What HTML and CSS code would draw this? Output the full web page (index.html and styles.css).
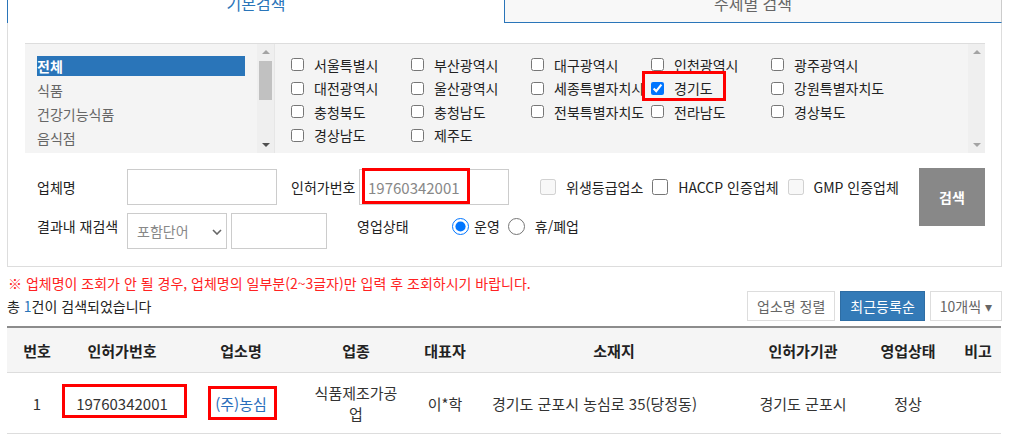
FILE: index.html
```html
<!DOCTYPE html>
<html lang="ko">

<head>
    <meta charset="UTF-8">
    <meta name="viewport" content="width=device-width, initial-scale=1.0">
    <title>업소 검색</title>
    <link rel="stylesheet" href="styles.css">
</head>

<body>
    <div class="wrap">
        <!-- 검색 탭 -->
        <div class="tabs">
            <div class="tab tab-on">기본검색</div>
            <div class="tab">주제별 검색</div>
        </div>

        <div class="panel">
            <div class="picker">
                <div class="cat-box">
                    <ul class="cat-list">
                        <li class="cat-on">전체</li>
                        <li>식품</li>
                        <li>건강기능식품</li>
                        <li>음식점</li>
                    </ul>
                    <div class="scroll">
                        <span class="arrow-up"></span>
                        <span class="thumb"></span>
                        <span class="arrow-down"></span>
                    </div>
                </div>
                <div class="area-box">
                    <div class="area-grid">
                        <label class="area"><input type="checkbox">서울특별시</label>
                        <label class="area"><input type="checkbox">부산광역시</label>
                        <label class="area"><input type="checkbox">대구광역시</label>
                        <label class="area"><input type="checkbox">인천광역시</label>
                        <label class="area"><input type="checkbox">광주광역시</label>
                        <label class="area"><input type="checkbox">대전광역시</label>
                        <label class="area"><input type="checkbox">울산광역시</label>
                        <label class="area"><input type="checkbox">세종특별자치시</label>
                        <label class="area"><input type="checkbox" checked>경기도</label>
                        <label class="area"><input type="checkbox">강원특별자치도</label>
                        <label class="area"><input type="checkbox">충청북도</label>
                        <label class="area"><input type="checkbox">충청남도</label>
                        <label class="area"><input type="checkbox">전북특별자치도</label>
                        <label class="area"><input type="checkbox">전라남도</label>
                        <label class="area"><input type="checkbox">경상북도</label>
                        <label class="area"><input type="checkbox">경상남도</label>
                        <label class="area"><input type="checkbox">제주도</label>
                    </div>
                    <div class="scroll">
                        <span class="arrow-up"></span>
                        <span class="arrow-down"></span>
                    </div>
                </div>
            </div>

            <div class="search">
                <div class="fields">
                    <div class="row">
                        <span class="lbl">업체명</span>
                        <input class="txt" type="text">
                        <span class="lbl lbl-no">인허가번호</span>
                        <input class="txt" type="text" value="19760342001">
                        <label class="chk chk-first"><input type="checkbox" disabled>위생등급업소</label>
                        <label class="chk"><input type="checkbox">HACCP 인증업체</label>
                        <label class="chk"><input type="checkbox" disabled>GMP 인증업체</label>
                    </div>
                    <div class="row row-two">
                        <span class="lbl">결과내 재검색</span>
                        <div class="sel-wrap">
                            <select class="sel">
                                <option>포함단어</option>
                            </select>
                            <svg class="chev" width="10" height="6" viewBox="0 0 10 6">
                                <polyline points="1,1 5,5 9,1" fill="none" stroke="#666" stroke-width="1.6"/>
                            </svg>
                        </div>
                        <input class="txt txt-small" type="text">
                        <span class="lbl lbl-state">영업상태</span>
                        <label class="rad"><input type="radio" name="state" checked>운영</label>
                        <label class="rad rad-off"><input type="radio" name="state">휴/폐업</label>
                    </div>
                </div>
                <button class="btn-search">검색</button>
            </div>
        </div>

        <p class="notice">※ 업체명이 조회가 안 될 경우, 업체명의 일부분(2~3글자)만 입력 후 조회하시기 바랍니다.</p>

        <div class="result-bar">
            <span class="total">총 <em>1</em>건이 검색되었습니다</span>
            <div class="sorts">
                <button class="btn">업소명 정렬</button>
                <button class="btn btn-on">최근등록순</button>
                <button class="btn">10개씩 ▾</button>
            </div>
        </div>

        <table class="list">
            <colgroup>
                <col style="width: 60px">
                <col style="width: 110px">
                <col style="width: 128px">
                <col style="width: 102px">
                <col style="width: 76px">
                <col style="width: 262px">
                <col style="width: 116px">
                <col style="width: 94px">
                <col style="width: 46px">
            </colgroup>
            <thead>
                <tr>
                    <th>번호</th>
                    <th>인허가번호</th>
                    <th>업소명</th>
                    <th>업종</th>
                    <th>대표자</th>
                    <th>소재지</th>
                    <th>인허가기관</th>
                    <th>영업상태</th>
                    <th>비고</th>
                </tr>
            </thead>
            <tbody>
                <tr>
                    <td>1</td>
                    <td>19760342001</td>
                    <td><a class="link" href="#">(주)농심</a></td>
                    <td>식품제조가공업</td>
                    <td>이*학</td>
                    <td class="addr">경기도 군포시 농심로 35(당정동)</td>
                    <td>경기도 군포시</td>
                    <td>정상</td>
                    <td></td>
                </tr>
            </tbody>
        </table>
    </div>

    <!-- 강조 표시 -->
    <div class="mark mark-area"></div>
    <div class="mark mark-input"></div>
    <div class="mark mark-no"></div>
    <div class="mark mark-name"></div>
</body>

</html>
```

FILE: styles.css
```css
body {
    margin: 0;
    position: relative;
    font-family: "Noto Sans CJK KR", "Noto Sans", sans-serif;
    font-size: 14px;
    color: #222;
    overflow: hidden;
}

.wrap {
    margin-left: 7px;
    width: 995px;
}

/* 탭 */
.tabs {
    display: flex;
    margin-top: -22px;
    height: 45px;
}

.tab {
    flex: 1;
    box-sizing: border-box;
    text-align: center;
    padding-top: 4px;
    line-height: 40px;
    font-size: 16px;
    color: #666;
    background: #f8f8f8;
    border: 1px solid #ccc;
    border-left: none;
    border-bottom: 1px solid #2a75b9;
}

.tab-on {
    color: #2a75b9;
    background: #fff;
    border: 1px solid #2a75b9;
    border-bottom: none;
}

.panel {
    border: 1px solid #ddd;
    border-top: none;
    padding: 20px 16px 17px 17px;
}

/* 업종 / 지역 선택 */
.picker {
    display: flex;
    height: 109px;
    border-top: 1px solid #ddd;
    background: #f4f4f4;
}

.cat-box {
    display: flex;
    width: 250px;
    border-right: 1px solid #e6e6e6;
    box-sizing: border-box;
}

.cat-list {
    flex: 1;
    list-style: none;
    margin: 0;
    padding: 12px 12px 0;
}

.cat-list li {
    height: 20px;
    line-height: 20px;
    margin-bottom: 4px;
    color: #666;
}

.cat-list .cat-on {
    background: #2a75b9;
    color: #fff;
    font-weight: bold;
}

.scroll {
    width: 17px;
    background: #efefef;
    display: flex;
    flex-direction: column;
    align-items: center;
}

.arrow-up {
    margin-top: 6px;
    border: 4px solid transparent;
    border-top: none;
    border-bottom: 4px solid #a3a3a3;
}

.arrow-down {
    margin-top: auto;
    margin-bottom: 6px;
    border: 4px solid transparent;
    border-bottom: none;
    border-top: 4px solid #a3a3a3;
}

.cat-box .arrow-down {
    border-top-color: #505050;
}

.thumb {
    margin-top: 7px;
    width: 13px;
    height: 39px;
    background: #c1c1c1;
}

.area-box {
    flex: 1;
    display: flex;
}

.area-grid {
    flex: 1;
    display: grid;
    grid-template-columns: repeat(5, 120px);
    grid-auto-rows: 23.5px;
    padding: 9px 0 0 16px;
}

.area {
    display: flex;
    align-items: center;
    gap: 10px;
    white-space: nowrap;
    color: #222;
}

.area input {
    margin: 0;
    width: 13px;
    height: 13px;
}

/* 검색 조건 */
.search {
    display: flex;
    margin-top: 15px;
}

.fields {
    flex: 1;
    padding-left: 12px;
}

.row {
    display: flex;
    align-items: center;
    height: 36px;
    margin-top: 1px;
}

.row-two {
    margin-top: 8px;
    align-items: flex-start;
}

.lbl {
    width: 90px;
    flex-shrink: 0;
    white-space: nowrap;
}

.row-two .lbl {
    line-height: 26px;
}

.lbl-no {
    width: 68px;
    margin-left: 14px;
}

.lbl-state {
    width: 95px;
    margin-left: 30px;
}

.txt {
    box-sizing: border-box;
    width: 150px;
    height: 36px;
    border: 1px solid #ccc;
    padding: 0 8px;
    font-family: inherit;
    font-size: 15px;
    color: #888;
    outline: none;
}

.txt-small {
    width: 96px;
    margin-left: 4px;
}

.sel-wrap {
    position: relative;
}

.sel {
    appearance: none;
    box-sizing: border-box;
    width: 100px;
    height: 36px;
    border: 1px solid #ccc;
    background: #fff;
    padding: 0 9px;
    font-family: inherit;
    font-size: 14px;
    color: #888;
}

.chev {
    position: absolute;
    left: 85px;
    top: 16px;
}

.chk {
    display: flex;
    align-items: center;
    gap: 10px;
    margin-left: 9px;
    white-space: nowrap;
}

.chk-first {
    margin-left: 31px;
}

.chk input {
    margin: 0;
    width: 16px;
    height: 16px;
}

.rad {
    display: flex;
    align-items: center;
    gap: 5px;
    height: 26px;
    white-space: nowrap;
}

.rad input {
    margin: 0;
    width: 17px;
    height: 17px;
}

.rad-off {
    margin-left: 8px;
    gap: 10px;
}

.btn-search {
    width: 66px;
    height: 58px;
    border: none;
    background: #888;
    color: #fff;
    font-family: inherit;
    font-size: 14px;
    font-weight: bold;
}

/* 결과 */
.notice {
    margin: 7px 0 0 1px;
    line-height: 18px;
    color: #f22;
}

.result-bar {
    display: flex;
    align-items: center;
    justify-content: space-between;
    margin-top: -1px;
}

.total em {
    font-style: normal;
    color: #2a75b9;
}

.sorts {
    display: flex;
    gap: 5px;
}

.btn {
    height: 30px;
    padding: 0 9px;
    border: 1px solid #ddd;
    background: #fff;
    color: #666;
    font-family: inherit;
    font-size: 14px;
}

.btn-on {
    background: #337ab7;
    border-color: #2e6da4;
    color: #fff;
}

.list {
    width: 994px;
    margin-top: 5px;
    table-layout: fixed;
    border-collapse: collapse;
    border-top: 2px solid #8c8c8c;
    font-size: 15px;
}

.list th {
    height: 44px;
    padding: 0 5px;
    background: #f5f5f5;
    border-bottom: 1px solid #ddd;
    color: #222;
}

.list td {
    padding: 9px 5px;
    line-height: 21px;
    text-align: center;
    border-bottom: 1px solid #ddd;
    color: #333;
}

.list .addr {
    text-align: left;
    padding-left: 9px;
}

.link {
    color: #2a6ebb;
    text-decoration: none;
}

.mark {
    position: absolute;
    box-sizing: border-box;
    border: 3px solid #f00;
}

.mark-area {
    left: 642px;
    top: 71px;
    width: 84px;
    height: 30px;
}

.mark-input {
    left: 362px;
    top: 168px;
    width: 108px;
    height: 36px;
}

.mark-no {
    left: 62px;
    top: 384px;
    width: 125px;
    height: 34px;
}

.mark-name {
    left: 208px;
    top: 386px;
    width: 69px;
    height: 34px;
}
```
